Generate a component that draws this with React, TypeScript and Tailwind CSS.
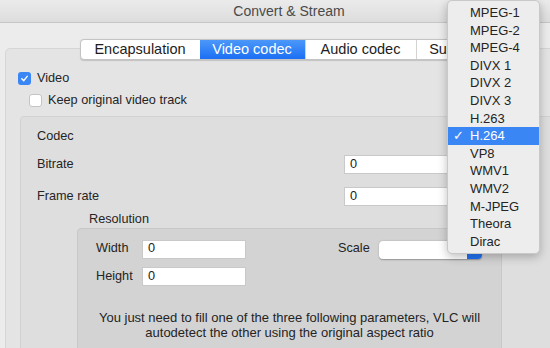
const codecs = [
  "MPEG-1",
  "MPEG-2",
  "MPEG-4",
  "DIVX 1",
  "DIVX 2",
  "DIVX 3",
  "H.263",
  "H.264",
  "VP8",
  "WMV1",
  "WMV2",
  "M-JPEG",
  "Theora",
  "Dirac",
];

const tabs = [
  { label: "Encapsulation", width: "w-[119px]" },
  { label: "Video codec", width: "w-[105px]" },
  { label: "Audio codec", width: "w-[111px]" },
  { label: "Subtitles", width: "w-[82px]" },
];

function Tabs() {
  return (
    <div className="relative z-10 -mt-[10px] flex h-[21px] justify-center">
      <div className="flex overflow-hidden rounded-[4px] border border-[#c4c4c4] bg-white shadow-[0_0.5px_1px_rgba(0,0,0,0.15)]">
        {tabs.map((t, i) => (
          <div
            key={t.label}
            className={`${t.width} flex items-center justify-center text-[14.5px] leading-none ${
              i === 1
                ? "bg-gradient-to-b from-[#4b98f9] to-[#1c6ef4] text-white"
                : "text-[#1d1d1d]"
            } ${i > 1 ? "border-l border-[#d4d4d4]" : ""}`}
          >
            {t.label}
          </div>
        ))}
      </div>
    </div>
  );
}

function TextField({ width }: { width: string }) {
  return (
    <div
      className={`${width} flex h-[19px] items-center border border-[#c9c9c9] bg-white pl-[5px] text-[12.7px] text-[#222]`}
    >
      0
    </div>
  );
}

function CodecMenu() {
  return (
    <div className="absolute left-[447px] top-0 z-20 h-[254px] w-[93px] rounded-[5px] border border-[#c9c9c9] bg-[#ededed] pt-[3px] shadow-[0_3px_10px_rgba(0,0,0,0.25)]">
      {codecs.map((c) => {
        const sel = c === "H.264";
        return (
          <div
            key={c}
            className={`relative flex h-[17.6px] items-center pl-[22px] text-[13px] ${
              sel ? "bg-[#3a86f4] font-medium text-white" : "text-[#242424]"
            }`}
          >
            {sel && <span className="absolute left-[5px] text-[13px]">✓</span>}
            {c}
          </div>
        );
      })}
    </div>
  );
}

export default function App() {
  return (
    <div
      className="relative h-[348px] w-[550px] overflow-hidden bg-[#ececec] text-[#242424]"
      style={{ fontFamily: '"Liberation Sans", Arial, sans-serif' }}
    >
      <div className="w-[578px]">
        <div className="flex h-[23px] items-center justify-center border-b border-[#c6c6c6] bg-gradient-to-b from-[#ebebeb] to-[#dddddd] text-[14px] text-[#4a4a4a]">
          Convert &amp; Stream
        </div>

        <div className="ml-[5px] mt-[25px] w-[568px] rounded-[5px] border border-[#d6d6d6] bg-[#e4e4e4] pb-[40px]">
          <Tabs />

          <div className="mt-[12px] flex items-center pl-[12px]">
            <div className="flex h-[13px] w-[13px] items-center justify-center rounded-[3px] bg-[#3b86f5]">
              <svg width="9" height="9" viewBox="0 0 10 10">
                <path d="M2 5.2 L4.2 7.4 L8 2.6" fill="none" stroke="white" strokeWidth="1.6" strokeLinecap="round" strokeLinejoin="round" />
              </svg>
            </div>
            <span className="ml-[6px] text-[12.7px] leading-none">Video</span>
          </div>

          <div className="mt-[9px] flex items-center pl-[23px]">
            <div className="h-[13px] w-[13px] rounded-[3px] border border-[#c4c4c4] bg-white" />
            <span className="ml-[6px] text-[12.7px] leading-none">Keep original video track</span>
          </div>

          <div className="ml-[14px] mt-[9px] w-[538px] rounded-[4px] border border-[#d2d2d2] bg-[#dedede] pb-[20px] pt-[10px]">
            <div className="flex h-[20px] items-center pl-[16px] text-[12.7px]">Codec</div>

            <div className="mt-[8px] flex h-[19px] items-center pl-[16px] text-[12.7px]">
              <span className="w-[307px]">Bitrate</span>
              <TextField width="w-[176px]" />
            </div>

            <div className="mt-[13px] flex h-[19px] items-center pl-[16px] text-[12.7px]">
              <span className="w-[307px]">Frame rate</span>
              <TextField width="w-[176px]" />
            </div>

            <div className="ml-[68px] mt-[6px] flex h-[15px] items-center text-[12.7px]">Resolution</div>

            <div className="ml-[56px] mt-[1px] h-[140px] w-[425px] rounded-[4px] border border-[#c8c8c8] bg-[#d3d3d3] pt-[10px]">
              <div className="flex items-center pl-[18px] text-[12.7px]">
                <span className="w-[46px]">Width</span>
                <TextField width="w-[104px]" />
                <span className="ml-[92px] w-[41px]">Scale</span>
                <div className="mt-[2px] flex h-[18px] w-[103px] overflow-hidden rounded-[4px] bg-white shadow-[0_0.5px_1.5px_rgba(0,0,0,0.3)]">
                  <div className="flex-1" />
                  <div className="w-[15px] bg-gradient-to-b from-[#3f8df7] to-[#1e6ef2]" />
                </div>
              </div>

              <div className="mt-[8px] flex items-center pl-[18px] text-[12.7px]">
                <span className="w-[46px]">Height</span>
                <TextField width="w-[104px]" />
              </div>

              <p className="mt-[24px] text-center text-[13px] leading-[15px]">
                You just need to fill one of the three following parameters, VLC will
                <br />
                autodetect the other using the original aspect ratio
              </p>
            </div>
          </div>
        </div>
      </div>

      <CodecMenu />
    </div>
  );
}
